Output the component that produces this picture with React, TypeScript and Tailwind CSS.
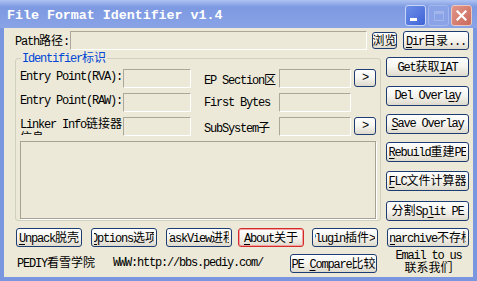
import clsx from 'clsx';

// "&" marks the access key (underlined), as in a Windows resource string
const CJK = /[\u2E80-\u9FFF\uFF00-\uFFEF]/;

function Txt({ s }: { s: string }) {
  const segs: { text: string; cjk: boolean; u: boolean }[] = [];
  for (let i = 0; i < s.length; i++) {
    let ch = s[i];
    let u = false;
    if (ch === '&' && i + 1 < s.length) {
      i++;
      ch = s[i];
      u = true;
    }
    const cjk = CJK.test(ch);
    const last = segs[segs.length - 1];
    if (last && last.cjk === cjk && last.u === u) last.text += ch;
    else segs.push({ text: ch, cjk, u });
  }
  return (
    <span className="whitespace-pre">
      {segs.map((g, i) => (
        <span
          key={i}
          className={clsx(
            g.cjk ? "font-['Noto_Sans_CJK_SC']" : 'tracking-[-1.2px]',
            g.u && 'underline decoration-1 underline-offset-[2px]',
          )}
        >
          {g.text}
        </span>
      ))}
    </span>
  );
}

function Btn({ s, className }: { s: string; className?: string }) {
  return (
    <div
      className={clsx(
        'flex shrink-0 rounded-[3px] border bg-linear-to-b from-white via-[#f5f4ef] to-[#dedacd] px-[2px] text-black',
        className ?? 'border-[#1d3c72]',
      )}
    >
      {/* the caption is clipped a little inside the frame, like a Win32 button */}
      <div className="flex w-full items-center justify-center overflow-hidden">
        <Txt s={s} />
      </div>
    </div>
  );
}

function Field({ className }: { className: string }) {
  return (
    <div
      className={clsx(
        'shrink-0 border border-t-[#aca899] border-l-[#aca899] border-r-white border-b-white bg-[#ece9d8]',
        className,
      )}
    />
  );
}

function TitleButtons() {
  return (
    <div className="mt-[5px] ml-auto mr-[5px] flex gap-[2px] self-start">
      <div className="flex h-[21px] w-[21px] items-end rounded-[3px] border border-[#c9d6f6] bg-linear-to-br from-[#6d8fe8] to-[#3f63d6] px-[4px] pb-[4px]">
        <div className="h-[3px] w-[7px] bg-white" />
      </div>
      <div className="flex h-[21px] w-[21px] items-center justify-center rounded-[3px] border border-[#a3b7ee] bg-[#8aa3e6]">
        <div className="h-[10px] w-[10px] border border-t-[3px] border-[#a2b6ec]" />
      </div>
      <div className="flex h-[21px] w-[21px] items-center justify-center rounded-[3px] border border-[#ecc7be] bg-linear-to-br from-[#e2968a] to-[#c96a5c]">
        <svg width="11" height="11" viewBox="0 0 11 11">
          <path d="M1.5 1.5 L9.5 9.5 M9.5 1.5 L1.5 9.5" stroke="white" strokeWidth="2.2" strokeLinecap="square" />
        </svg>
      </div>
    </div>
  );
}

const rows = [
  { left: 'Entry Point(RVA):', right: 'EP Section区', more: true },
  { left: 'Entry Point(RAW):', right: 'First Bytes', more: false },
  { left: 'Linker Info链接器信息:', right: 'SubSystem子', more: true },
];

const sideButtons = [
  { s: 'Get获取&IAT', mt: 'mt-[7px]' },
  { s: 'Del Overl&ay', mt: 'mt-[9px]' },
  { s: '&Save Overlay', mt: 'mt-[8px]' },
  { s: '&Rebuild重建PE', mt: 'mt-[8px]' },
  { s: '&FLC文件计算器', mt: 'mt-[9px]' },
  { s: '分割Sp&lit PE', mt: 'mt-[10px]' },
];

export default function App() {
  return (
    <div className="flex h-[281px] w-[477px] flex-col overflow-hidden bg-[#7a96df] font-['Liberation_Mono','Noto_Sans_CJK_SC',monospace] text-[12px] leading-[13px] text-black">
      {/* title bar (inactive Luna) */}
      <div className="flex h-[28px] shrink-0 items-center bg-linear-to-b from-[#adc3f3] from-0% via-[#7d99e1] via-25% to-[#89a3e6] to-100% pl-[7px]">
        <span className="mt-[3px] text-[13.3px] font-bold tracking-normal text-white">
          File Format Identifier v1.4
        </span>
        <TitleButtons />
      </div>

      <div className="mx-[4px] mb-[4px] flex flex-1 flex-col bg-[#ece9d8]">
        {/* path row */}
        <div className="mt-[3px] flex h-[19px] items-center pl-[11px]">
          <div className="w-[55px] shrink-0">
            <Txt s="Path路径:" />
          </div>
          <Field className="h-[19px] w-[297px]" />
          <Btn s="浏览" className="ml-[5px] h-[17px] w-[25px] border-[#1d3c72] !px-0" />
          <Btn s="&Dir目录..." className="ml-[6px] h-[19px] w-[66px] border-[#1d3c72]" />
        </div>

        {/* main area */}
        <div className="flex items-start pl-[11px]">
          <fieldset className="w-[366px] shrink-0 rounded-[3px] border border-[#d0d0bf] px-[4px] pb-[1px]">
            <legend className="ml-[1px] px-[1px] leading-[14px] text-[#0046d5]">
              <Txt s="Identifier标识" />
            </legend>
            <div className="mt-[3px] flex flex-col gap-[5px]">
              {rows.map((r) => (
                <div key={r.left} className="flex h-[19px] items-start">
                  {r.left.includes('链') ? (
                    <div className="h-[18px] w-[103px] shrink-0 overflow-hidden leading-[12px]">
                      <Txt s="Linker Info链接器" />
                      <br />
                      <Txt s="信息:" />
                    </div>
                  ) : (
                    <div className="h-[19px] w-[103px] shrink-0 pt-[2px]">
                      <Txt s={r.left} />
                    </div>
                  )}
                  <Field className="h-[19px] w-[68px]" />
                  <div className="ml-[13px] w-[75px] shrink-0 self-center pt-[2px]">
                    <Txt s={r.right} />
                  </div>
                  <Field className="h-[19px] w-[72px]" />
                  {r.more && (
                    <Btn s=">" className="ml-[3px] h-[18px] w-[22px] border-[#1d3c72]" />
                  )}
                </div>
              ))}
            </div>
            <div className="mt-[5px] h-[78px] w-[356px] border border-[#a5a394] shadow-[1px_1px_0_white]" />
          </fieldset>

          <div className="ml-[5px] flex w-[83px] flex-col">
            {sideButtons.map((b) => (
              <Btn key={b.s} s={b.s} className={clsx('h-[20px] w-[83px] border-[#1d3c72]', b.mt)} />
            ))}
          </div>
        </div>

        {/* command buttons */}
        <div className="mt-[7px] flex h-[19px] pl-[12px]">
          <Btn s="&Unpack脱壳" className="h-[19px] w-[66px] border-[#1d3c72]" />
          <Btn s="&Options选项" className="ml-[9px] h-[19px] w-[66px] border-[#1d3c72]" />
          <Btn s="TaskView进程" className="ml-[9px] h-[19px] w-[66px] border-[#1d3c72]" />
          <Btn
            s="&About关于"
            className="ml-[6px] h-[19px] w-[66px] border-[#d42b2b] shadow-[inset_0_0_0_1px_#f3a0a0] text-[#0b2a8a]"
          />
          <Btn s="Plugin插件>>" className="ml-[8px] h-[19px] w-[66px] border-[#1d3c72]" />
          <Btn s="U&narchive不存档" className="ml-[9px] h-[19px] w-[82px] border-[#1d3c72]" />
        </div>

        {/* footer */}
        <div className="mt-[3px] flex h-[26px] items-center pl-[13px]">
          <div className="w-[96px] shrink-0">
            <Txt s="PEDIY看雪学院" />
          </div>
          <div className="w-[177px] shrink-0">
            <Txt s="WWW:http://bbs.pediy.com/" />
          </div>
          <Btn s="PE &Compare比较" className="mt-[4px] h-[19px] w-[87px] self-start border-[#1d3c72] !px-0" />
          <div className="ml-[18px] mt-[1px] flex w-[67px] flex-col items-center self-start leading-[10px]">
            <Txt s="Email to us" />
            <span className="mt-[1px]">
              <Txt s="联系我们" />
            </span>
          </div>
        </div>
      </div>
    </div>
  );
}
